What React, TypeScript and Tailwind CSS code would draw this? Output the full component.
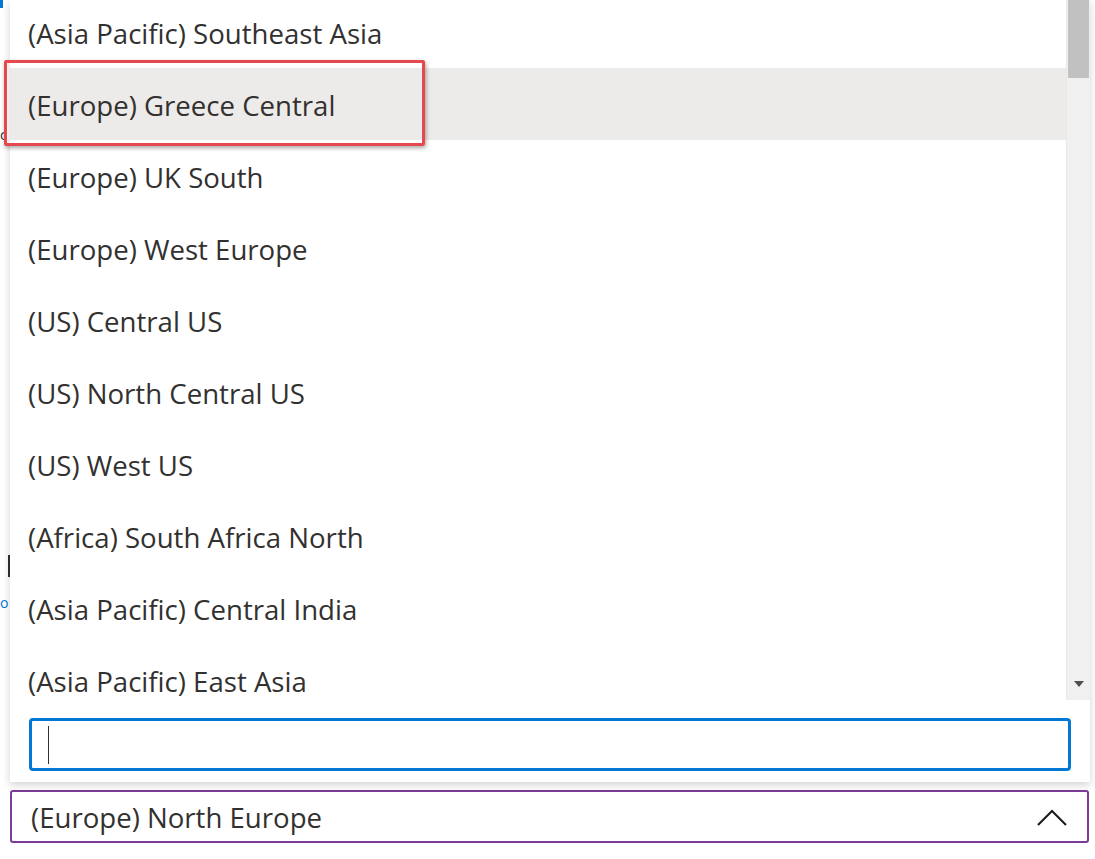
import React from "react";

const items = [
  "(Asia Pacific) Southeast Asia",
  "(Europe) Greece Central",
  "(Europe) UK South",
  "(Europe) West Europe",
  "(US) Central US",
  "(US) North Central US",
  "(US) West US",
  "(Africa) South Africa North",
  "(Asia Pacific) Central India",
  "(Asia Pacific) East Asia",
];

export default function App() {
  return (
    <div
      className="relative w-[1095px] h-[859px] bg-white overflow-hidden text-[#323130]"
      style={{ fontFamily: '"Open Sans", "Noto Sans", sans-serif' }}
    >
      {/* background page hints */}
      <div className="absolute left-0 top-0 w-[3px] h-[8px] bg-[#0078d4]" />
      <div className="absolute left-0 top-[128px] text-[14px] leading-none text-[#323130]">c</div>
      <div className="absolute left-[8px] top-[555px] w-[2px] h-[22px] bg-[#323130]" />
      <div className="absolute left-0 top-[596px] text-[14px] leading-none text-[#0078d4]">o</div>

      <div className="flex flex-col">
        {/* dropdown panel */}
        <div className="ml-[10px] w-[1080px] h-[782px] bg-white shadow-[0_3px_8px_rgba(0,0,0,0.18)] flex flex-col relative z-10">
          <div className="flex h-[700px]">
            <div className="flex-1 overflow-hidden">
              <div className="mt-[-4px]">
                {items.map((t, i) => (
                  <div
                    key={t}
                    className={`h-[72px] flex items-center pl-[18px] pt-[4px] text-[27.6px] ${
                      i === 1 ? "bg-[#edebe9]" : ""
                    }`}
                  >
                    {t}
                  </div>
                ))}
              </div>
            </div>
            {/* scrollbar */}
            <div className="w-[24px] bg-[#f0f0f0] flex flex-col items-center border-l border-[#e8e8e8]">
              <div className="w-[21px] h-[78px] bg-[#c1c1c1]" />
              <div className="flex-1" />
              <div className="h-[24px] flex items-center justify-center mb-[4px]">
                <svg width="10" height="6" viewBox="0 0 10 6">
                  <path d="M0 0 H10 L5 6 Z" fill="#505050" />
                </svg>
              </div>
            </div>
          </div>
          <div className="pt-[18px] pl-[19px] pr-[19px]">
            <div className="h-[53px] border-[3px] border-[#0078d4] rounded-[4px] flex items-center pl-[16px]">
              <div className="w-[1px] h-[38px] bg-[#323130]" />
            </div>
          </div>
        </div>

        {/* combobox */}
        <div className="mt-[8px] ml-[10px] w-[1079px] h-[53px] border-2 border-[#7a3c96] rounded-[3px] flex items-center justify-between pl-[19px] pr-[20px]">
          <span className="text-[27.6px] pt-[2px]">(Europe) North Europe</span>
          <svg width="30" height="18" viewBox="0 0 30 18" fill="none">
            <path d="M1 17 L15 3 L29 17" stroke="#1b1a19" strokeWidth="2" />
          </svg>
        </div>
      </div>

      {/* red annotation */}
      <div className="absolute left-[4px] top-[60px] w-[421px] h-[86px] border-[3px] border-[#e5484d] rounded-[2px] shadow-[1px_2px_4px_rgba(0,0,0,0.35)] z-20" />
    </div>
  );
}
